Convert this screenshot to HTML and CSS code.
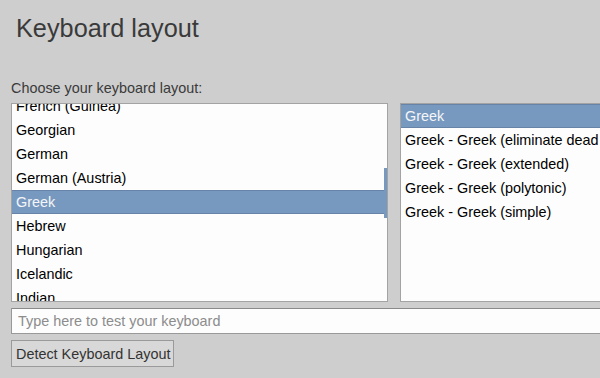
FILE: index.html
```html
<!DOCTYPE html>
<html lang="en">
<head>
    <meta charset="UTF-8">
    <title>Keyboard layout</title>
    <meta name="viewport" content="width=device-width, initial-scale=1">
    <link rel="stylesheet" href="styles.css">
</head>
<body>
<div class="page">
    <h1 class="title">Keyboard layout</h1>
    <div class="label">Choose your keyboard layout:</div>
    <div class="lists">
        <div class="listbox layouts">
            <ul class="items scrolled">
                <li>French (Guinea)</li>
                <li>Georgian</li>
                <li>German</li>
                <li>German (Austria)</li>
                <li class="selected">Greek</li>
                <li>Hebrew</li>
                <li>Hungarian</li>
                <li>Icelandic</li>
                <li>Indian</li>
                <li>Irish</li>
            </ul>
            <div class="thumb"></div>
        </div>
        <div class="listbox variants">
            <ul class="items">
                <li class="selected">Greek</li>
                <li>Greek - Greek (eliminate dead keys)</li>
                <li>Greek - Greek (extended)</li>
                <li>Greek - Greek (polytonic)</li>
                <li>Greek - Greek (simple)</li>
            </ul>
        </div>
    </div>
    <input class="test" type="text" placeholder="Type here to test your keyboard">
    <button class="detect" type="button">Detect Keyboard Layout</button>
</div>
</body>
</html>
```

FILE: styles.css
```css
html, body { margin: 0; padding: 0; }
body { background: #cecece; font-family: 'Liberation Sans', Arial, sans-serif; font-size: 14.4px; color: #000; width: 600px; height: 378px; overflow: hidden; }
.page { padding: 0 0 0 11px; width: 640px; }
.title { margin: 0; padding: 13px 5px 0; font-size: 25.3px; line-height: 30px; font-weight: normal; color: #3a3a3a; }
.label { margin-top: 36px; line-height: 18px; color: #3a3a3a; }
.lists { display: flex; gap: 12px; margin-top: 6px; }
.listbox { position: relative; height: 199px; box-sizing: border-box; border: 1px solid #a3a3a3; background: #fdfdfd; overflow: hidden; }
.layouts { width: 377px; }
.variants { width: 230px; }
.items { list-style: none; margin: 0; padding: 0; }
.items.scrolled { margin-top: -10px; }
.items li { height: 24px; line-height: 24px; padding-left: 4px; white-space: nowrap; }
.items li.selected { background: #7899bf; color: #f4f6f8; box-shadow: inset 0 1px 0 #6883a8, inset 0 -1px 0 #6883a8; }
.layouts .items li.selected { margin-right: 3px; }
.thumb { position: absolute; right: 0; top: 64px; width: 3px; height: 50px; background: #7899bf; }
.test { display: block; margin-top: 6px; width: 620px; height: 26px; box-sizing: border-box; border: 1px solid #999; border-top-color: #8a8a8a; background: #fdfdfd; padding: 0 6px; font-family: inherit; font-size: 14.4px; outline: none; }
.test::placeholder { color: #8c8c8c; }
.detect { display: block; margin-top: 6px; width: 163px; height: 27px; box-sizing: border-box; border: 1px solid #9a9a9a; border-radius: 0; background: #d8d8d8; color: #333; font-family: inherit; font-size: 14.4px; padding: 0 0 0 4px; text-align: left; }
```
